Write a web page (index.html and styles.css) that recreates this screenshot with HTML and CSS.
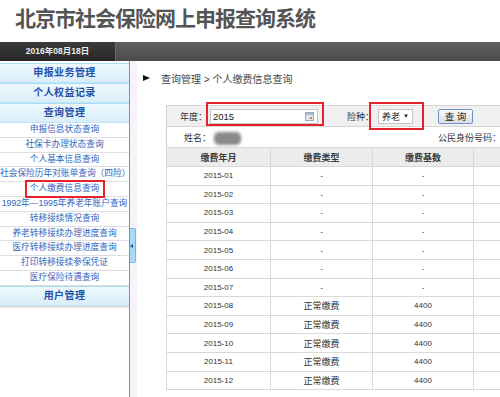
FILE: index.html
```html
<!DOCTYPE html>
<html lang="zh-CN">
<head>
  <meta charset="UTF-8">
  <title>北京市社会保险网上申报查询系统</title>
  <link rel="stylesheet" href="styles.css">
</head>
<body>
  <div class="header">
    <h1>北京市社会保险网上申报查询系统</h1>
  </div>

  <div class="topbar">
    <div class="date-cell">2016年08月18日</div>
    <div class="topbar-rest"></div>
  </div>

  <div class="layout">
    <div class="sidebar">
      <div class="menu-head">申报业务管理</div>
      <div class="menu-head">个人权益记录</div>
      <div class="menu-head">查询管理</div>
      <div class="menu-item">申报信息状态查询</div>
      <div class="menu-item">社保卡办理状态查询</div>
      <div class="menu-item">个人基本信息查询</div>
      <div class="menu-item">社会保险历年对账单查询（四险）</div>
      <div class="menu-item"><span class="marked">个人缴费信息查询</span></div>
      <div class="menu-item">1992年—1995年养老年账户查询</div>
      <div class="menu-item">转移接续情况查询</div>
      <div class="menu-item">养老转移接续办理进度查询</div>
      <div class="menu-item">医疗转移接续办理进度查询</div>
      <div class="menu-item">打印转移接续参保凭证</div>
      <div class="menu-item">医疗保险待遇查询</div>
      <div class="menu-head">用户管理</div>
      <div class="menu-end"></div>
    </div>

    <div class="splitter">
      <div class="handle"><span class="handle-arrow"></span></div>
    </div>

    <div class="main">
      <div class="crumbs">
        <span class="crumb-arrow"></span>
        <span class="crumb-text">查询管理 &gt; 个人缴费信息查询</span>
      </div>

      <div class="panel">
        <div class="search-row">
          <span class="label label-year">年度：</span>
          <span class="field year-field marked-field">
            2015
            <svg class="cal-icon" width="9" height="9" viewBox="0 0 9 9">
              <rect x="0.5" y="0.5" width="8" height="8" fill="#dfe6f0" stroke="#9aaac2"/>
              <rect x="1" y="1" width="7" height="2" fill="#a9b9d2"/>
              <rect x="5" y="5" width="2" height="2" fill="#e07a6a"/>
            </svg>
          </span>
          <span class="label label-type">险种：</span>
          <span class="field type-field marked-field wide-mark">养老 <span class="caret">▼</span></span>
          <span class="query-btn">查 询</span>
        </div>

        <div class="info-row">
          <span class="label label-name">姓名：</span>
          <span class="name-blur"></span>
          <span class="label label-id">公民身份号码：</span>
        </div>

        <table class="pay-table">
          <colgroup>
            <col class="c1"><col class="c2"><col class="c3"><col class="c4">
          </colgroup>
          <thead>
            <tr><th>缴费年月</th><th>缴费类型</th><th>缴费基数</th><th></th></tr>
          </thead>
          <tbody>
            <tr><td>2015-01</td><td>-</td><td>-</td><td></td></tr>
            <tr><td>2015-02</td><td>-</td><td>-</td><td></td></tr>
            <tr><td>2015-03</td><td>-</td><td>-</td><td></td></tr>
            <tr><td>2015-04</td><td>-</td><td>-</td><td></td></tr>
            <tr><td>2015-05</td><td>-</td><td>-</td><td></td></tr>
            <tr><td>2015-06</td><td>-</td><td>-</td><td></td></tr>
            <tr><td>2015-07</td><td>-</td><td>-</td><td></td></tr>
            <tr><td>2015-08</td><td class="cn">正常缴费</td><td>4400</td><td></td></tr>
            <tr><td>2015-09</td><td class="cn">正常缴费</td><td>4400</td><td></td></tr>
            <tr><td>2015-10</td><td class="cn">正常缴费</td><td>4400</td><td></td></tr>
            <tr><td>2015-11</td><td class="cn">正常缴费</td><td>4400</td><td></td></tr>
            <tr><td>2015-12</td><td class="cn">正常缴费</td><td>4400</td><td></td></tr>
          </tbody>
        </table>
      </div>
    </div>
  </div>
</body>
</html>
```

FILE: styles.css
```css
:root {
  --menu-blue: #2350a9;
  --item-blue: #2f66c0;
  --mark-red: #e8222a;
  --line: #d9d9d9;
}

* {
  margin: 0;
  padding: 0;
  box-sizing: border-box;
}

body {
  width: 500px;
  height: 397px;
  overflow: hidden;
  background: #fff;
  font-family: "Liberation Sans", "Noto Sans CJK SC", sans-serif;
  color: #333;
}

/* 标题 */
.header {
  height: 42px;
  padding: 7px 0 0 15px;
}

.header h1 {
  font-size: 21px;
  line-height: 24px;
  letter-spacing: -1px;
  font-weight: 700;
  color: #545454;
}

/* 顶部条 */
.topbar {
  display: flex;
  height: 19px;
}

.date-cell {
  width: 115px;
  background: linear-gradient(#3c3c3c, #262626);
  color: #ececec;
  font-size: 8.5px;
  font-weight: 700;
  line-height: 19px;
  text-align: center;
}

.topbar-rest {
  flex: 1;
  background: linear-gradient(#606060, #4a4a4a);
  border-left: 1px solid #6a6a6a;
}

.layout {
  display: flex;
  height: 336px;
}

/* 左侧菜单 */
.sidebar {
  width: 130px;
  padding-top: 2px;
  border-right: 1px solid #5b9bd5;
  background: #fff;
}

.menu-head {
  height: 20px;
  border-top: 1px solid #a9dcf5;
  border-bottom: 1px solid #bfe4f7;
  background: linear-gradient(#eef8fd, #d9eef9);
  color: var(--menu-blue);
  font-size: 10px;
  font-weight: 700;
  letter-spacing: 0.4px;
  line-height: 18px;
  text-align: center;
}

.menu-item {
  height: 14.8px;
  border-bottom: 1px solid #dedede;
  color: var(--item-blue);
  font-size: 8.7px;
  line-height: 13.8px;
  text-align: center;
  white-space: nowrap;
  overflow: hidden;
}

.marked {
  position: relative;
  display: inline-block;
}

.marked::after {
  content: "";
  position: absolute;
  top: -2px;
  bottom: -2px;
  left: -5px;
  right: -6px;
  border: 2px solid var(--mark-red);
}

.menu-item:has(.marked) {
  overflow: visible;
}

.menu-end {
  border-top: 2px solid #e2e2e2;
}

/* 分隔条 */
.splitter {
  width: 7px;
  background: #f7f3f9;
  display: flex;
  flex-direction: column;
}

.handle {
  margin-top: 167px;
  height: 35px;
  width: 6px;
  background: #aad8f7;
  border: 1px solid #74b6ea;
  border-left: none;
  border-radius: 0 2px 2px 0;
  display: flex;
  align-items: center;
}

.handle-arrow {
  width: 0;
  height: 0;
  border-top: 2.5px solid transparent;
  border-bottom: 2.5px solid transparent;
  border-right: 3px solid #1d4f9a;
}

/* 主区域 */
.main {
  flex: 1;
  overflow: hidden;
  padding-top: 10px;
}

.crumbs {
  display: flex;
  align-items: center;
  height: 14px;
}

.crumb-arrow {
  margin-left: 6px;
  width: 0;
  height: 0;
  border-top: 3.5px solid transparent;
  border-bottom: 3.5px solid transparent;
  border-left: 7px solid #111;
}

.crumb-text {
  margin-left: 11px;
  font-size: 10px;
  color: #444;
}

.panel {
  width: 440px;
  margin: 20px 0 0 29px;
  border-left: 1px solid #d0d0d0;
}

.search-row,
.info-row {
  display: flex;
  align-items: center;
  height: 21px;
  border-top: 1px solid #d6d6d6;
  font-size: 9px;
}

.search-row {
  background: #f0f0f0;
}

.info-row {
  background: #fff;
}

.label {
  flex: none;
  color: #333;
}

.label-year {
  margin-left: 13px;
  width: 30px;
}

.field {
  position: relative;
  display: flex;
  align-items: center;
  height: 15px;
  background: #fff;
  border: 1px solid #c4c4c4;
  font-size: 9px;
  color: #222;
}

.year-field {
  width: 108px;
  padding-left: 2px;
  font-size: 9.5px;
}

.cal-icon {
  margin-left: auto;
  margin-right: 3px;
}

.marked-field::after {
  content: "";
  position: absolute;
  top: -8px;
  bottom: -3px;
  left: -5px;
  right: -7px;
  border: 2px solid var(--mark-red);
}

.wide-mark::after {
  top: -8px;
  bottom: -7px;
  left: -10px;
  right: -12px;
}

.label-type {
  margin-left: 29px;
  width: 31px;
}

.type-field {
  width: 35px;
  padding-left: 3px;
}

.caret {
  margin-left: 3px;
  font-size: 6px;
}

.query-btn {
  margin-left: 25px;
  width: 35px;
  height: 15px;
  border: 1px solid #6f93cf;
  border-radius: 2px;
  background: linear-gradient(#fafafa, #dcdcdc);
  font-size: 9.5px;
  line-height: 13px;
  text-align: center;
  color: #222;
}

.label-name {
  margin-left: 17px;
  width: 30px;
}

.name-blur {
  width: 27px;
  height: 13px;
  margin-top: 2px;
  border-radius: 5px;
  background: #8a8a8a;
  filter: blur(1.5px);
}

.label-id {
  margin-left: 197px;
  white-space: nowrap;
}

/* 缴费表格 */
.pay-table {
  width: 408px;
  border-collapse: collapse;
  table-layout: fixed;
  margin-left: -1px;
}

.c1 { width: 104px; }
.c2 { width: 102px; }
.c3 { width: 101px; }
.c4 { width: 101px; }

.pay-table th,
.pay-table td {
  height: 18.6px;
  padding: 0;
  border: 1px solid var(--line);
  text-align: center;
  vertical-align: middle;
  font-size: 8px;
  color: #333;
}

.pay-table th {
  height: 19px;
  background: #ececec;
  font-size: 9px;
  font-weight: 700;
  color: #3a3a3a;
}

.pay-table td.cn {
  font-size: 9px;
}
```
